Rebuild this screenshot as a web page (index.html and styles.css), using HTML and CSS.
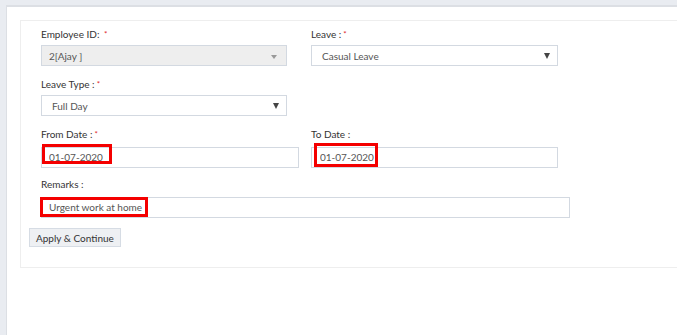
FILE: index.html
```html
<!DOCTYPE html>
<html>
<head>
    <title>Apply Leave</title>
    <link rel="stylesheet" href="styles.css">
</head>
<body>
    <div class="page">
        <div class="card">
            <div class="row">
                <div class="col">
                    <label class="label">Employee ID: <span class="req">*</span></label>
                    <div class="select disabled w-sel">
                        <span>2[Ajay ]</span>
                        <span class="caret small"></span>
                    </div>
                </div>
                <div class="col">
                    <label class="label">Leave :<span class="req">*</span></label>
                    <div class="select w-sel2 pad10">
                        <span>Casual Leave</span>
                        <span class="caret"></span>
                    </div>
                </div>
            </div>
            <div class="row">
                <div class="col">
                    <label class="label">Leave Type :<span class="req">*</span></label>
                    <div class="select w-sel pad10">
                        <span>Full Day</span>
                        <span class="caret"></span>
                    </div>
                </div>
            </div>
            <div class="row">
                <div class="col">
                    <label class="label">From Date :<span class="req">*</span></label>
                    <div class="field w-date">
                        <input class="input" type="text" value="01-07-2020">
                        <span class="mark mark-from"></span>
                    </div>
                </div>
                <div class="col">
                    <label class="label">To Date :</label>
                    <div class="field w-sel2">
                        <input class="input pad8" type="text" value="01-07-2020">
                        <span class="mark mark-to"></span>
                    </div>
                </div>
            </div>
            <div class="row">
                <div class="col wide">
                    <label class="label">Remarks :</label>
                    <div class="field w-remarks">
                        <input class="input" type="text" value="Urgent work at home">
                        <span class="mark mark-remarks"></span>
                    </div>
                </div>
            </div>
            <button class="btn" type="button">Apply &amp; Continue</button>
        </div>
    </div>
</body>
</html>
```

FILE: styles.css
```css
html, body {
    height: 100%;
}
body {
    margin: 0;
    background: #e9ecf1;
    font-family: Lato, "Open Sans", sans-serif;
    color: #333;
}
.page {
    margin: 5px 0 0 6px;
    height: calc(100% - 5px);
    background: #fff;
    border-top: 2px solid #dcdfe4;
    border-left: 1px solid #dcdfe4;
    padding: 13px 0 0 13px;
    box-sizing: border-box;
}
.card {
    border: 1px solid #eeeeee;
    border-right: none;
    padding: 7px 0 20px 20px;
}
.row {
    display: flex;
    margin-bottom: 12px;
}
.col {
    width: 270px;
}
.col.wide {
    width: auto;
}
.label {
    display: block;
    font-size: 10px;
    line-height: 12px;
    height: 12px;
    margin-bottom: 5px;
    color: #333;
}
.req {
    color: #e0262b;
    font-size: 8px;
    margin-left: 2px;
    vertical-align: top;
}
.select {
    height: 21px;
    box-sizing: border-box;
    border: 1px solid #d3d9e1;
    background: #fff;
    display: flex;
    align-items: center;
    justify-content: space-between;
    padding: 0 7px 0 7px;
    font-size: 10px;
    color: #555;
}
.select.pad10 {
    padding-left: 10px;
}
.select.disabled {
    background: #eeeeee;
    padding-right: 9px;
}
.caret {
    width: 0;
    height: 0;
    border-left: 3px solid transparent;
    border-right: 3px solid transparent;
    border-top: 6px solid #444;
}
.caret.small {
    border-top: 4px solid #999;
    margin-top: 3px;
}
.w-sel { width: 246px; }
.w-sel2 { width: 247px; }
.w-date { width: 258px; }
.w-remarks { width: 529px; }
.field {
    position: relative;
    height: 21px;
}
.input {
    width: 100%;
    height: 21px;
    box-sizing: border-box;
    border: 1px solid #d3d9e1;
    padding: 0 7px;
    font-family: Lato, "Open Sans", sans-serif;
    font-size: 10px;
    color: #555;
    outline: none;
}
.input.pad8 {
    padding-left: 8px;
}
.mark {
    position: absolute;
    border: 3px solid #f40000;
    box-sizing: border-box;
}
.mark-from {
    left: 1px;
    top: -1px;
    width: 70px;
    height: 20px;
}
.mark-to {
    left: 3px;
    top: -2px;
    width: 64px;
    height: 24px;
}
.mark-remarks {
    left: -1px;
    top: 2px;
    width: 108px;
    height: 20px;
}
.btn {
    display: block;
    margin-left: -12px;
    height: 19px;
    padding: 0 6px;
    background: #eef0f3;
    border: 1px solid #d6dce4;
    font-family: Lato, "Open Sans", sans-serif;
    font-size: 10px;
    color: #333;
    cursor: pointer;
}
```
